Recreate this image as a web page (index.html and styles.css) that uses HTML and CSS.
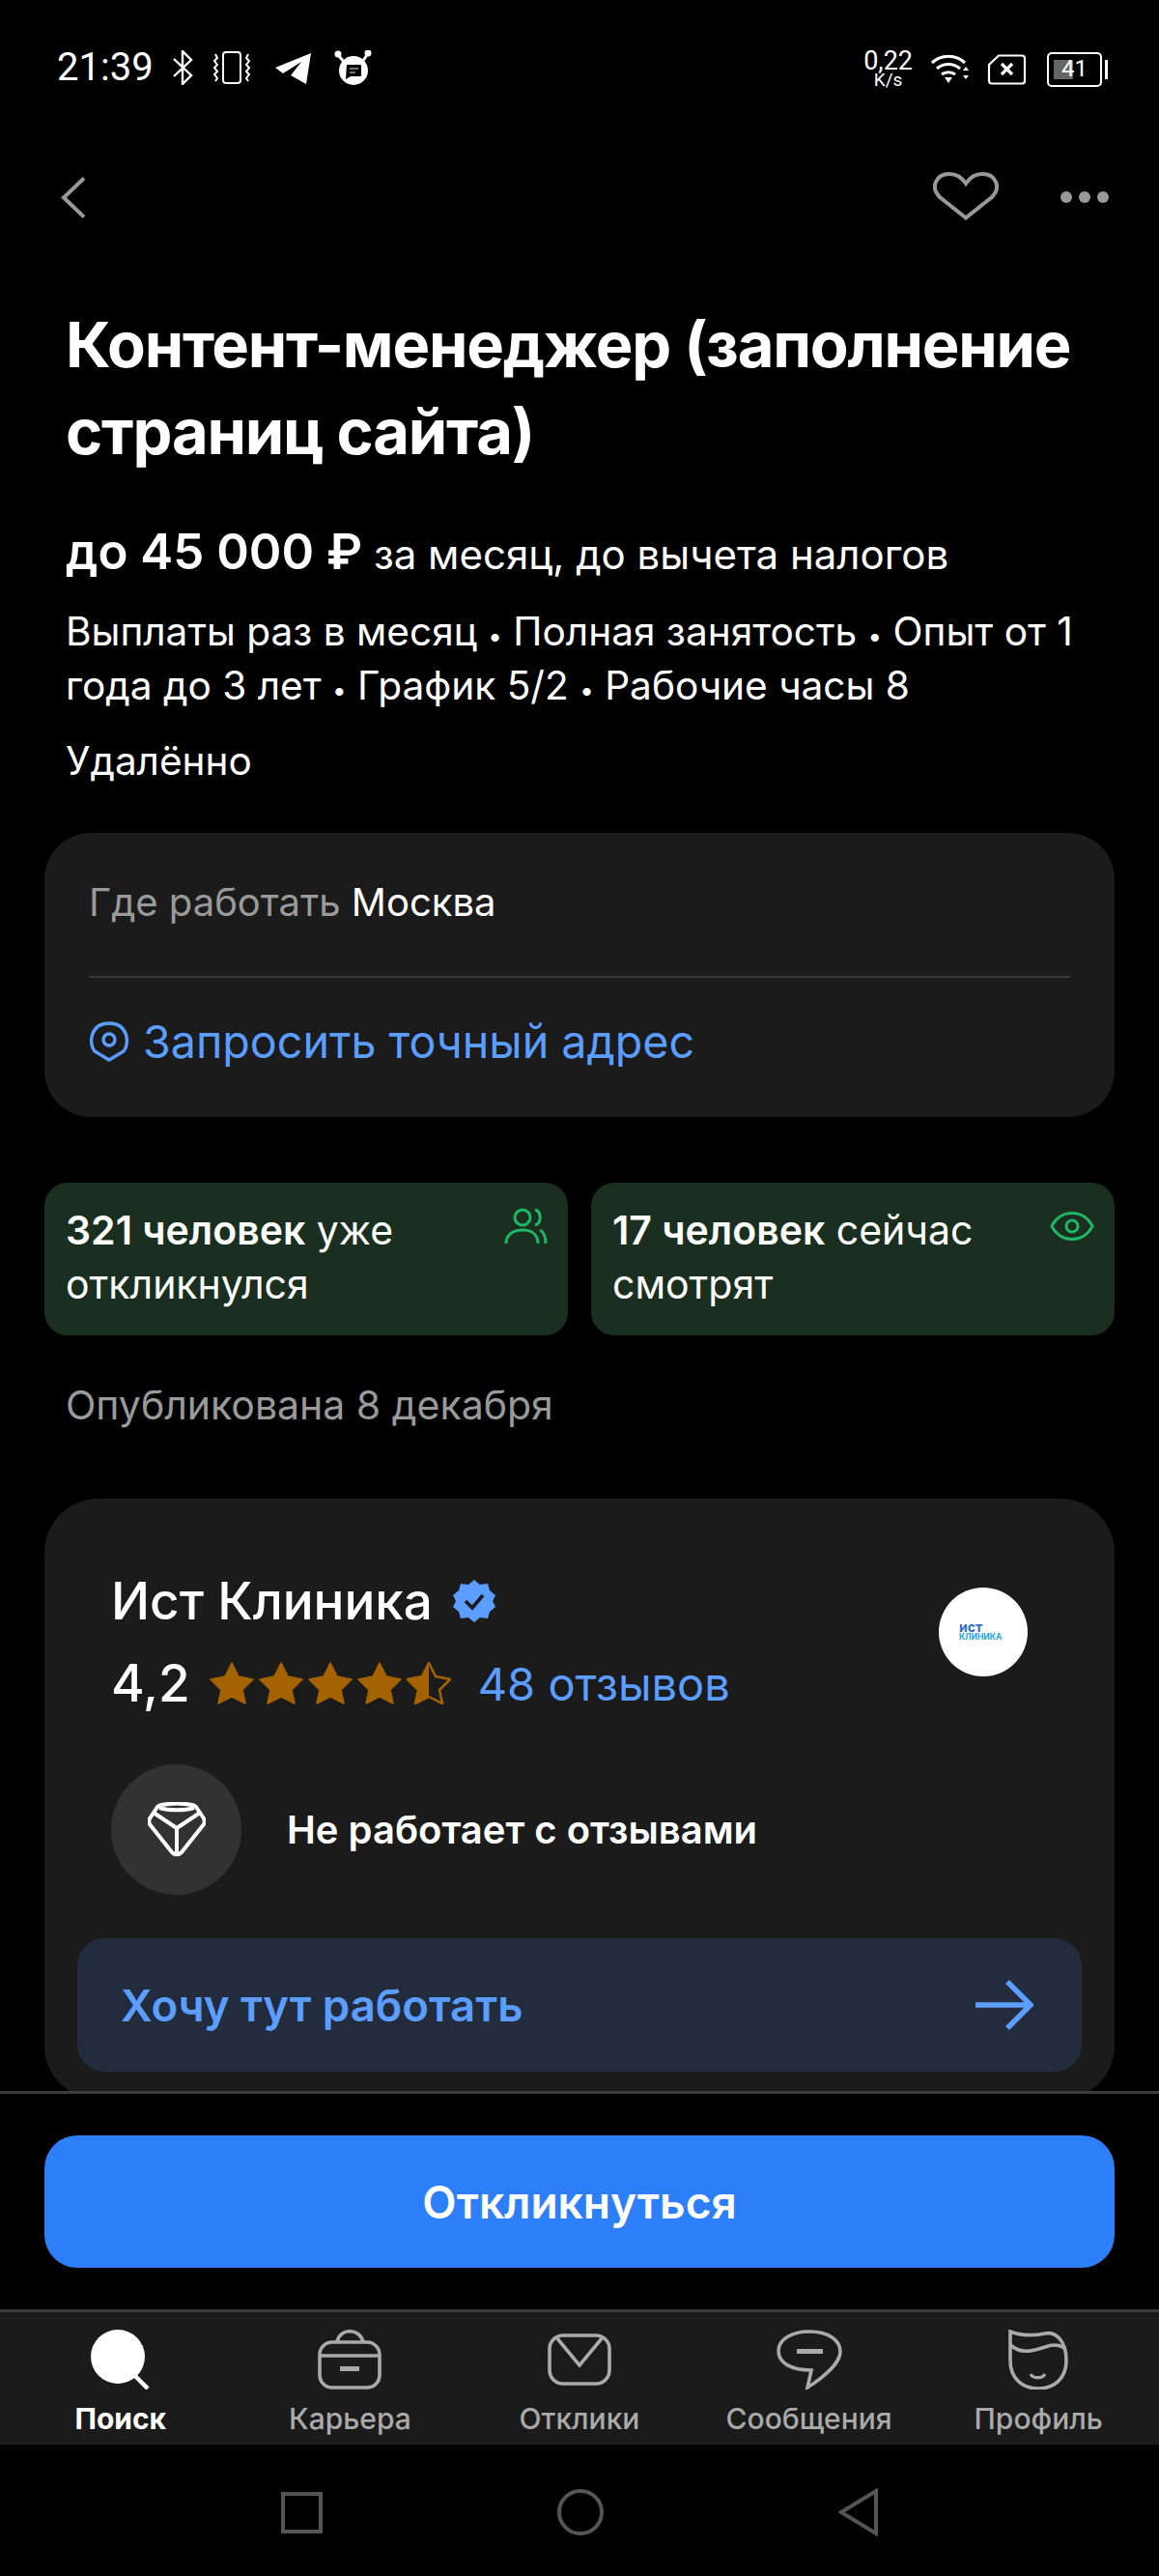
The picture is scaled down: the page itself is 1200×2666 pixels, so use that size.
FILE: index.html
```html
<!DOCTYPE html>
<html lang="ru">
<head>
  <meta charset="UTF-8" />
  <meta name="viewport" content="width=device-width, initial-scale=1.0" />
  <title>Вакансия</title>
  <link rel="stylesheet" href="styles.css">
</head>
<body>
  <div class="status-bar">
    <div class="status-left">
      <span class="clock">21:39</span>
      <svg class="st-bt" viewBox="0 0 22 36" fill="none" stroke="#fff" stroke-width="2.4"><path d="M2 9l18 17-9 9V1l9 9L2 27"/></svg>
      <svg class="st-vib" viewBox="0 0 40 34" fill="none" stroke="#fff" stroke-width="2"><rect x="11" y="1" width="18" height="32" rx="3"/><path d="M3 3l2 4-3 3 3 4-3 3 3 4-3 3 3 4-2 3M37 3l-2 4 3 3-3 4 3 3-3 4 3 3-3 4 2 3"/></svg>
      <svg class="st-tg" viewBox="0 0 39 33" fill="#fff"><path d="M1 16L38 1 33 33 17 24 28 10 9 22z"/></svg>
      <svg class="st-bear" viewBox="0 0 39 36"><circle cx="20" cy="21" r="15" fill="#fff"/><circle cx="4" cy="4" r="3.5" fill="#fff"/><circle cx="35" cy="3" r="3.5" fill="#fff"/><path d="M5 6l5 6M34 5l-5 7" stroke="#fff" stroke-width="3"/><path d="M13 15h14a1 1 0 0 1 1 1v10a1 1 0 0 1-1 1H17l-5 3z" fill="#000"/><path d="M16 19h9M16 23h6" stroke="#999" stroke-width="1.5"/></svg>
    </div>
    <div class="status-right">
      <div class="speed"><span>0,22</span><span class="speed-unit">K/s</span></div>
      <svg class="st-wifi" viewBox="0 0 40 30" fill="none" stroke="#fff" stroke-width="3.2"><path d="M1 8c10-9 24-9 34 0M6 14c7-6 17-6 24 0M11 20c4-3 10-3 14 0"/><path d="M14 23h8l-4 6zM33 16l3-4 3 4zM33 21h6l-3 4z" fill="#fff" stroke="none"/></svg>
      <svg class="st-sim" viewBox="0 0 40 32" fill="none" stroke="#fff" stroke-width="2.2"><path d="M12 1.5h24a3 3 0 0 1 3 3v23a3 3 0 0 1-3 3H5a3 3 0 0 1-3-3V11z"/><path d="M15 10l11 11M26 10L15 21" stroke-width="3.2"/></svg>
      <div class="battery"><div class="battery-body"><span class="battery-fill"></span><span class="battery-num">41</span></div><span class="battery-tip"></span></div>
    </div>
  </div>

  <div class="toolbar">
    <svg class="back-icon" viewBox="0 0 25 43" fill="none" stroke="#999" stroke-width="4"><path d="M24 1.5L3 21.5l21 20"/></svg>
    <div class="toolbar-right">
      <svg class="heart-icon" viewBox="0 0 68 50" fill="none" stroke="#999" stroke-width="4"><path d="M34 47.5L7 26C-3 16 3 2 17 2c8 0 13 4 17 10C38 6 43 2 51 2c14 0 20 14 10 24z"/></svg>
      <div class="dots"><i></i><i></i><i></i></div>
    </div>
  </div>

  <main class="content">
    <h1 class="title">Контент-менеджер (заполнение страниц сайта)</h1>
    <p class="salary"><b>до 45 000 ₽</b> за месяц, до вычета налогов</p>
    <p class="terms">Выплаты раз в месяц <span class="sep">•</span> Полная занятость <span class="sep">•</span> Опыт от 1 года до 3 лет <span class="sep">•</span> График 5/2 <span class="sep">•</span> Рабочие часы 8</p>
    <p class="remote">Удалённо</p>

    <section class="where-card">
      <div class="where-top"><span class="muted">Где работать</span> Москва</div>
      <div class="where-link">
        <svg class="pin-icon" viewBox="0 0 42 42" fill="none" stroke="#5c9eff" stroke-width="3.4"><path d="M21 40L6 31C-1 22 2 2 21 2s22 20 15 29z"/><circle cx="21" cy="19" r="6"/></svg>
        Запросить точный адрес
      </div>
    </section>

    <div class="stats">
      <div class="stat-card">
        <p><b>321 человек</b> уже откликнулся</p>
        <svg class="stat-people" viewBox="0 0 45 38" fill="none" stroke="#1fb765" stroke-width="3"><circle cx="19" cy="10" r="8"/><path d="M2 37c0-9 7-14 17-14s16 5 16 14M32 2c7 2 7 14 0 16M37 23c4 2 6 7 6 14"/></svg>
      </div>
      <div class="stat-card">
        <p><b>17 человек</b> сейчас смотрят</p>
        <svg class="stat-eye" viewBox="0 0 46 32" fill="none" stroke="#1fb765" stroke-width="3"><path d="M2 16C11 -2 35 -2 44 16 35 34 11 34 2 16z"/><circle cx="23" cy="16" r="6"/></svg>
      </div>
    </div>

    <p class="published">Опубликована 8 декабря</p>

    <section class="company-card">
      <div class="company-head">
        <div>
          <div class="company-name">Ист Клиника
            <svg class="verified" viewBox="0 0 46 46"><path d="M23 1l6 5 8-1 2 7 6 5-3 6 3 6-6 5-2 7-8-1-6 5-6-5-8 1-2-7-6-5 3-6-3-6 6-5 2-7 8 1z" fill="#5c9eff"/><path d="M14 23l7 7 11-13" fill="none" stroke="#1b1b1b" stroke-width="3.6"/></svg>
          </div>
          <div class="rating">
            <span class="rating-num">4,2</span>
            <svg class="stars" viewBox="0 0 250 44">
              <defs>
                <path id="star" d="M23 1l7 14 15 3-11 11 3 14-14-7-14 7 3-14L1 18l15-3z" stroke-linejoin="round"/>
                <clipPath id="half"><rect x="204" width="23" height="44"/></clipPath>
              </defs>
              <use href="#star" fill="#a56200" stroke="#a56200" stroke-width="1.5"/>
              <use href="#star" x="51" fill="#a56200" stroke="#a56200" stroke-width="1.5"/>
              <use href="#star" x="102" fill="#a56200" stroke="#a56200" stroke-width="1.5"/>
              <use href="#star" x="153" fill="#a56200" stroke="#a56200" stroke-width="1.5"/>
              <use href="#star" x="204" fill="none" stroke="#a56200" stroke-width="2.5"/>
              <g clip-path="url(#half)"><use href="#star" x="204" fill="#a56200"/></g>
            </svg>
            <span class="reviews">48 отзывов</span>
          </div>
        </div>
        <div class="logo"><span class="logo-a">ист</span><span class="logo-b">КЛИНИКА</span></div>
      </div>
      <div class="no-reviews">
        <div class="badge">
          <svg viewBox="0 0 60 57" fill="none" stroke="#fff" stroke-width="4" stroke-linejoin="round"><path d="M14 3c10-2 22-2 32 0 2 0 3 1 4 2l8 12c1 2 1 4 0 6L35 52c-3 3-7 3-10 0L2 23c-1-2-1-4 0-6l8-12c1-1 2-2 4-2z"/><path d="M6 11l24 16 24-16M30 27v27M12 6c10 3 26 3 36 0"/></svg>
        </div>
        <span>Не работает с отзывами</span>
      </div>
      <div class="want-row">
        <span>Хочу тут работать</span>
        <svg class="arrow" viewBox="0 0 60 52" fill="none" stroke="#5c9eff" stroke-width="5.5"><path d="M0 26h56M33 2l24 24-24 24"/></svg>
      </div>
    </section>
  </main>

  <div class="apply-bar">
    <button class="apply-btn">Откликнуться</button>
  </div>

  <nav class="tabbar">
    <div class="tab active">
      <svg viewBox="0 0 62 62"><circle cx="28" cy="28" r="28" fill="#fff"/><path d="M44 46l15 15" stroke="#fff" stroke-width="4.5"/></svg>
      <span>Поиск</span>
    </div>
    <div class="tab">
      <svg viewBox="0 0 66 62" fill="none" stroke="#aaa" stroke-width="3.6"><rect x="2" y="13" width="62" height="47" rx="13"/><path d="M2 27h62M20 13c2-15 24-15 27 0"/><path d="M23 38h20v5H23z" fill="#aaa" stroke="none"/></svg>
      <span>Карьера</span>
    </div>
    <div class="tab">
      <svg viewBox="0 0 66 62" fill="none" stroke="#aaa" stroke-width="3.6"><rect x="2" y="6" width="62" height="50" rx="14"/><path d="M9 8l24 29 24-29"/></svg>
      <span>Отклики</span>
    </div>
    <div class="tab">
      <svg viewBox="0 0 68 62" fill="none" stroke="#aaa" stroke-width="3.6"><path d="M34 2c20 0 32 9 32 21 0 10-14 24-34 37l4-18C16 42 2 35 2 22 2 10 16 2 34 2z"/><path d="M21 20h27v5H21z" fill="#aaa" stroke="none"/></svg>
      <span>Сообщения</span>
    </div>
    <div class="tab">
      <svg viewBox="0 0 62 62" fill="none" stroke="#aaa" stroke-width="3.6"><path d="M2 2c12 5 28 4 36 2 10-2 22 6 22 28 0 18-12 29-29 29S2 50 2 32z"/><path d="M2 16c12 10 24 6 36 2 8-3 16-2 21 2"/><path d="M23 46c3 5 12 5 15 0" stroke-width="3.4"/></svg>
      <span>Профиль</span>
    </div>
  </nav>

  <div class="sys-nav">
    <span class="sys-square"></span>
    <span class="sys-circle"></span>
    <svg class="sys-back" viewBox="0 0 42 50" fill="none" stroke="#555" stroke-width="4"><path d="M39 3v44L3 25z"/></svg>
  </div>
</body>
</html>
```

FILE: styles.css
```css
* {
  box-sizing: border-box;
  margin: 0;
  padding: 0;
}

html, body {
  height: 2666px;
}

body {
  width: 1200px;
  background: #000;
  color: #fff;
  font-family: Inter, 'Noto Sans', sans-serif;
  display: flex;
  flex-direction: column;
  overflow: hidden;
}

b {
  font-weight: 600;
}

svg {
  display: block;
  flex: none;
}

/* status bar */
.status-bar {
  height: 174px;
  padding: 52px 53px 0 59px;
  display: flex;
  justify-content: space-between;
  align-items: flex-start;
  flex: none;
}

.status-left, .status-right {
  display: flex;
  align-items: center;
}

.clock {
  font-family: Roboto, sans-serif;
  font-size: 40px;
  line-height: 36px;
  width: 119px;
}

.st-bt { width: 22px; height: 36px; margin-right: 20px; }
.st-vib { width: 40px; height: 34px; margin-right: 24px; }
.st-tg { width: 39px; height: 33px; margin-right: 23px; }
.st-bear { width: 39px; height: 36px; }

.speed {
  font-family: Roboto, sans-serif;
  font-size: 27px;
  line-height: 22px;
  display: flex;
  flex-direction: column;
  align-items: center;
  margin-right: 19px;
}

.speed-unit { font-size: 19px; line-height: 18px; }
.st-wifi { width: 40px; height: 30px; margin-right: 18px; }
.st-sim { width: 40px; height: 32px; margin-right: 22px; }

.battery {
  display: flex;
  align-items: center;
  gap: 3px;
}

.battery-body {
  width: 57px;
  height: 36px;
  border: 2.5px solid #fff;
  border-radius: 5px;
  position: relative;
  font-family: Roboto, sans-serif;
  font-size: 24px;
  line-height: 31px;
  text-align: center;
}

.battery-fill {
  position: absolute;
  left: 5px;
  top: 6px;
  width: 20px;
  height: 20px;
  background: #666;
}

.battery-num { position: relative; }
.battery-tip { width: 3px; height: 20px; background: #fff; }

/* toolbar */
.toolbar {
  height: 60px;
  padding: 0 52px 0 63px;
  display: flex;
  justify-content: space-between;
  align-items: center;
  flex: none;
}

.back-icon { width: 25px; height: 43px; }

.toolbar-right {
  display: flex;
  align-items: center;
  gap: 64px;
}

.heart-icon { width: 68px; height: 50px; margin-top: -2px; }

.dots {
  display: flex;
  gap: 7px;
}

.dots i {
  width: 12px;
  height: 12px;
  border-radius: 50%;
  background: #999;
}

/* scrolled content */
.content {
  flex: 1;
  min-height: 0;
  overflow: hidden;
  padding: 78px 46px 0;
}

.title {
  font-size: 65px;
  font-weight: 700;
  line-height: 90px;
  margin: 0 22px;
  letter-spacing: -1.2px;
}

.salary {
  font-size: 42px;
  line-height: 50px;
  margin: 54px 22px 0;
}

.salary b { font-size: 51px; }

.terms {
  font-size: 40.6px;
  line-height: 56px;
  margin: 27px 22px 0;
}

.sep { font-size: 26px; line-height: 0; }

.remote {
  font-size: 40.5px;
  line-height: 50px;
  margin: 25px 22px 0;
}

.where-card {
  background: #1b1b1b;
  border-radius: 48px;
  height: 294px;
  margin-top: 49px;
  padding: 0 46px;
  font-size: 40px;
}

.muted { color: #9a9a9a; }

.where-top {
  height: 150px;
  padding-top: 47px;
  line-height: 50px;
  border-bottom: 2px solid #3a3a3a;
}

.where-link {
  height: 132px;
  display: flex;
  align-items: center;
  gap: 14px;
  color: #5c9eff;
  font-size: 46.6px;
}

.pin-icon { width: 42px; height: 42px; }

.stats {
  display: grid;
  grid-template-columns: 542px 542px;
  gap: 24px;
  margin-top: 68px;
}

.stat-card {
  background: #1a2f20;
  border-radius: 24px;
  height: 158px;
  padding: 21px 21px 0 22px;
  display: flex;
  justify-content: space-between;
  font-size: 41px;
  line-height: 56px;
}

.stat-people { width: 45px; height: 38px; margin-top: 5px; }
.stat-eye { width: 46px; height: 32px; margin-top: 8px; }

.published {
  color: #9a9a9a;
  font-size: 41px;
  line-height: 50px;
  margin: 47px 22px 0;
}

.company-card {
  background: #1b1b1b;
  border-radius: 56px;
  margin-top: 72px;
  padding: 74px 34px 0;
  height: 622px;
}

.company-head {
  display: flex;
  justify-content: space-between;
  padding: 0 56px 0 35px;
}

.company-name {
  display: flex;
  align-items: center;
  gap: 20px;
  font-size: 53px;
  font-weight: 500;
  line-height: 64px;
}

.verified { width: 46px; height: 46px; }

.rating {
  display: flex;
  align-items: center;
  gap: 20px;
  margin-top: 23px;
}

.rating-num { font-size: 53px; font-weight: 500; line-height: 60px; }
.stars { width: 250px; height: 44px; }
.reviews { color: #5c9eff; font-size: 47px; margin-left: 8px; }

.logo {
  width: 92px;
  height: 92px;
  margin-top: 18px;
  border-radius: 50%;
  background: #fff;
  display: flex;
  flex-direction: column;
  justify-content: center;
  padding-left: 21px;
  font-weight: 700;
  line-height: 10px;
}

.logo-a { color: #2a6fd8; font-size: 14px; }
.logo-b { color: #22a6e8; font-size: 8.5px; }

.no-reviews {
  display: flex;
  align-items: center;
  gap: 47px;
  margin: 54px 0 0 35px;
  font-size: 40px;
  font-weight: 600;
}

.badge {
  width: 135px;
  height: 135px;
  border-radius: 50%;
  background: #323232;
  display: flex;
  align-items: center;
  justify-content: center;
}

.badge svg { width: 60px; height: 57px; }

.want-row {
  margin-top: 45px;
  height: 138px;
  background: #222c3c;
  border-radius: 28px;
  padding: 0 50px 0 45px;
  display: flex;
  align-items: center;
  justify-content: space-between;
  color: #5c9eff;
  font-size: 45.5px;
  font-weight: 600;
}

.arrow { width: 60px; height: 52px; }

/* bottom */
.apply-bar {
  flex: none;
  height: 226px;
  background: #000;
  border-top: 3px solid #3c3c3c;
  padding: 43px 46px 0;
}

.apply-btn {
  width: 100%;
  height: 137px;
  background: #2d7ff9;
  border: none;
  border-radius: 34px;
  color: #fff;
  font-family: inherit;
  font-size: 46px;
  font-weight: 600;
}

.tabbar {
  flex: none;
  height: 140px;
  background: #1b1b1b;
  border-top: 3px solid #3c3c3c;
  display: grid;
  grid-template-columns: repeat(5, 1fr);
  padding: 18px 6px 0;
}

.tab {
  display: flex;
  flex-direction: column;
  align-items: center;
  gap: 12px;
  color: #aaa;
  font-size: 30px;
  font-weight: 500;
  line-height: 36px;
}

.tab svg { height: 62px; width: auto; }
.tab.active { color: #fff; font-weight: 700; }

.sys-nav {
  flex: none;
  height: 136px;
  display: flex;
  align-items: center;
  justify-content: center;
  padding: 4px 0 0 0;
}

.sys-square {
  width: 43px;
  height: 43px;
  border: 4px solid #555;
}

.sys-circle {
  width: 48px;
  height: 48px;
  border: 4px solid #555;
  border-radius: 50%;
  margin: 0 243px;
}

.sys-back { width: 42px; height: 50px; }
```
